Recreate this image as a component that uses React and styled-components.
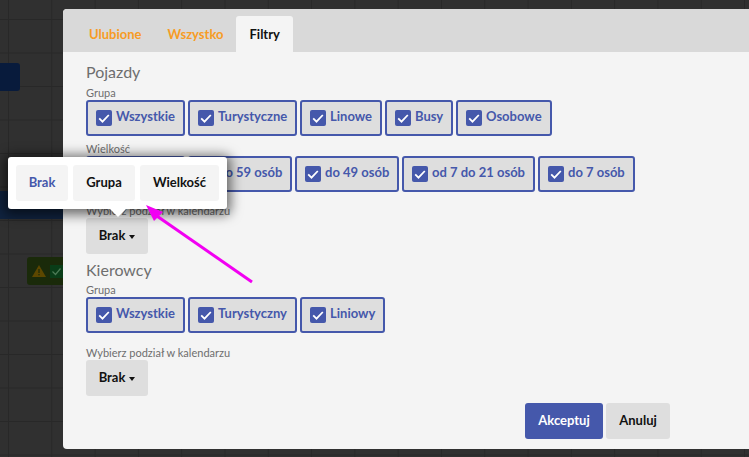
import React from 'react';
import styled, { createGlobalStyle } from 'styled-components';

const Global = createGlobalStyle`
  html, body { margin: 0; padding: 0; width: 749px; height: 457px; overflow: hidden; }
  body { font-family: Lato, "Noto Sans", sans-serif; }
  * { box-sizing: border-box; }
`;

const Page = styled.div`
  position: relative; width: 749px; height: 457px; overflow: hidden;
  background-color: #303030;
  background-image:
    linear-gradient(to right, #282828 1px, transparent 1px),
    linear-gradient(to bottom, #282828 1px, transparent 1px);
  background-size: 43.3px 33.5px;
  background-position: 8px 19px;
`;
const NavyBlock = styled.div`
  position: absolute; left: 0; top: 63px; width: 20px; height: 28px;
  background: #081b3c; border-radius: 0 3px 3px 0;
`;
const NavyBand = styled.div`
  position: absolute; left: 0; top: 191px; width: 63px; height: 28px;
  background: #10233f;
`;
const Badge = styled.div`
  position: absolute; left: 27px; top: 257px; width: 40px; height: 28px;
  background: #1a2a0a; border-radius: 3px;
  display: flex; align-items: center; padding-left: 5px; gap: 4px;
`;
const Modal = styled.div`
  position: absolute; left: 63px; top: 9px; width: 700px; height: 440px;
  background: #f4f4f4; border-radius: 4px; overflow: hidden;
  display: flex; flex-direction: column;
`;
const TabBar = styled.div`
  height: 43px; background: #d9d9d9; display: flex; align-items: flex-end; padding-left: 13px; flex: none;
`;
const Tab = styled.div`
  height: 36px; padding: 0 13px; display: flex; align-items: center; font-size: 13px; font-weight: 700;
  color: ${p => (p.$active ? '#111' : '#f79c25')};
  background: ${p => (p.$active ? '#f4f4f4' : 'transparent')};
  border-radius: 3px 3px 0 0;
`;
const Body = styled.div`
  padding: 10px 23px 0; display: flex; flex-direction: column; flex: 1;
`;
const Heading = styled.div`
  font-size: 16px; line-height: 20px; color: #6e6e6e; margin-top: ${p => p.$mt || 0}px;
`;
const Label = styled.div`
  font-size: 11px; line-height: 13px; color: #6e6e6e; margin-top: ${p => p.$mt || 0}px;
`;
const ChipRow = styled.div`
  display: flex; gap: 3px; margin-top: 1px;
`;
const Chip = styled.div`
  height: 36px; border: 2px solid #4558ab; border-radius: 3px; background: #dedede;
  padding: 0 9px 0 8px; display: flex; align-items: center; gap: 4px;
  color: #4558ab; font-size: 13px; font-weight: 700; white-space: nowrap;
  width: ${p => (p.$w ? p.$w + 'px' : 'auto')}; flex: none;
  span { position: relative; top: -2px; }
`;
const Box = styled.svg`
  width: 16px; height: 16px; flex: none; display: block;
`;
const Check = () => (
  <Box viewBox="0 0 16 16">
    <rect width="16" height="16" rx="2" fill="#4558ab" />
    <path d="M3.2 8.4 6.5 11.6 12.8 5" fill="none" stroke="#fff" strokeWidth="1.8" />
  </Box>
);
const Drop = styled.div`
  width: 62px; height: 36px; margin-top: 1px; background: #dedede; border-radius: 3px; display: flex; align-items: center;
  justify-content: center; gap: 4px; font-size: 13px; font-weight: 700; color: #111; padding-bottom: 2px;
`;
const Caret = styled.i`
  width: 0; height: 0; border-left: 3.5px solid transparent; border-right: 3.5px solid transparent;
  border-top: 4px solid #111; margin-top: 3px;
`;
const Footer = styled.div`
  position: absolute; left: 462px; top: 394px; display: flex; gap: 3px;
`;
const FootBtn = styled.div`
  height: 36px; width: ${p => p.$w}px; border-radius: 3px; display: flex; align-items: center; justify-content: center;
  font-size: 13px; font-weight: 700; color: ${p => (p.$primary ? '#fff' : '#111')};
  background: ${p => (p.$primary ? '#4558ab' : '#dedede')}; padding-bottom: 3px;
`;
const Popup = styled.div`
  position: absolute; left: 8px; top: 157px; width: 219px; height: 52px; background: #fff; border-radius: 3px;
  box-shadow: 0 2px 12px 4px rgba(0,0,0,.55); padding: 8px; display: flex; gap: 5px;
  &::after {
    content: ''; position: absolute; left: 102px; top: 52px; border-left: 8px solid transparent;
    border-right: 8px solid transparent; border-top: 8px solid #fff;
  }
`;
const PopItem = styled.div`
  height: 36px; width: ${p => p.$w}px; background: #f4f4f4; border-radius: 3px; display: flex; align-items: center;
  justify-content: center; font-size: 13px; font-weight: 700; color: ${p => (p.$on ? '#4558ab' : '#111')}; padding-bottom: 2px;
`;
const ArrowSvg = styled.svg`
  position: absolute; left: 130px; top: 190px; width: 140px; height: 110px; pointer-events: none;
`;

const row = (items) => items.map((t, i) => (
  <Chip key={i} $w={t[1]}><Check /><span>{t[0]}</span></Chip>
));

export default function App() {
  return (
    <Page>
      <Global />
      <NavyBlock />
      <NavyBand />
      <Badge>
        <svg width="14" height="12" viewBox="0 0 14 12"><path d="M7 0 14 12H0Z" fill="#5c4700" /><rect x="6.4" y="4" width="1.2" height="4" fill="#1a2a0a" /><rect x="6.4" y="9" width="1.2" height="1.3" fill="#1a2a0a" /></svg>
        <svg width="13" height="13" viewBox="0 0 13 13"><rect width="13" height="13" fill="#0a3d18" /><path d="M2.5 6.5 5.5 9.5 10.5 3.5" stroke="#4c7a55" strokeWidth="1.2" fill="none" /></svg>
      </Badge>
      <Modal>
        <TabBar>
          <Tab>Ulubione</Tab>
          <Tab>Wszystko</Tab>
          <Tab $active>Filtry</Tab>
        </TabBar>
        <Body>
          <Heading>Pojazdy</Heading>
          <Label $mt={4}>Grupa</Label>
          <ChipRow>
            {row([['Wszystkie', 99], ['Turystyczne', 109], ['Linowe', 82], ['Busy', 68], ['Osobowe', 96]])}
          </ChipRow>
          <Label $mt={6}>Wielkość</Label>
          <ChipRow>
            {row([['do 100 osób', 99], ['do 59 osób', 104], ['do 49 osób', 104], ['od 7 do 21 osób', 133], ['do 7 osób', 97]])}
          </ChipRow>
          <Label $mt={12}>Wybierz podział w kalendarzu</Label>
          <Drop>Brak <Caret /></Drop>
          <Heading $mt={6}>Kierowcy</Heading>
          <Label $mt={3}>Grupa</Label>
          <ChipRow>
            {row([['Wszystkie', 99], ['Turystyczny', 109], ['Liniowy', 85]])}
          </ChipRow>
          <Label $mt={13}>Wybierz podział w kalendarzu</Label>
          <Drop>Brak <Caret /></Drop>
        </Body>
        <Footer>
          <FootBtn $primary $w={78}>Akceptuj</FootBtn>
          <FootBtn $w={64}>Anuluj</FootBtn>
        </Footer>
      </Modal>
      <Popup>
        <PopItem $on $w={52}>Brak</PopItem>
        <PopItem $w={62}>Grupa</PopItem>
        <PopItem $w={79}>Wielkość</PopItem>
      </Popup>
      <ArrowSvg viewBox="0 0 140 110">
        <path d="M122 92 24 24" stroke="#f200f2" strokeWidth="3" fill="none" />
        <path d="M16 15 33 22 24 31Z" fill="#f200f2" />
      </ArrowSvg>
    </Page>
  );
}
